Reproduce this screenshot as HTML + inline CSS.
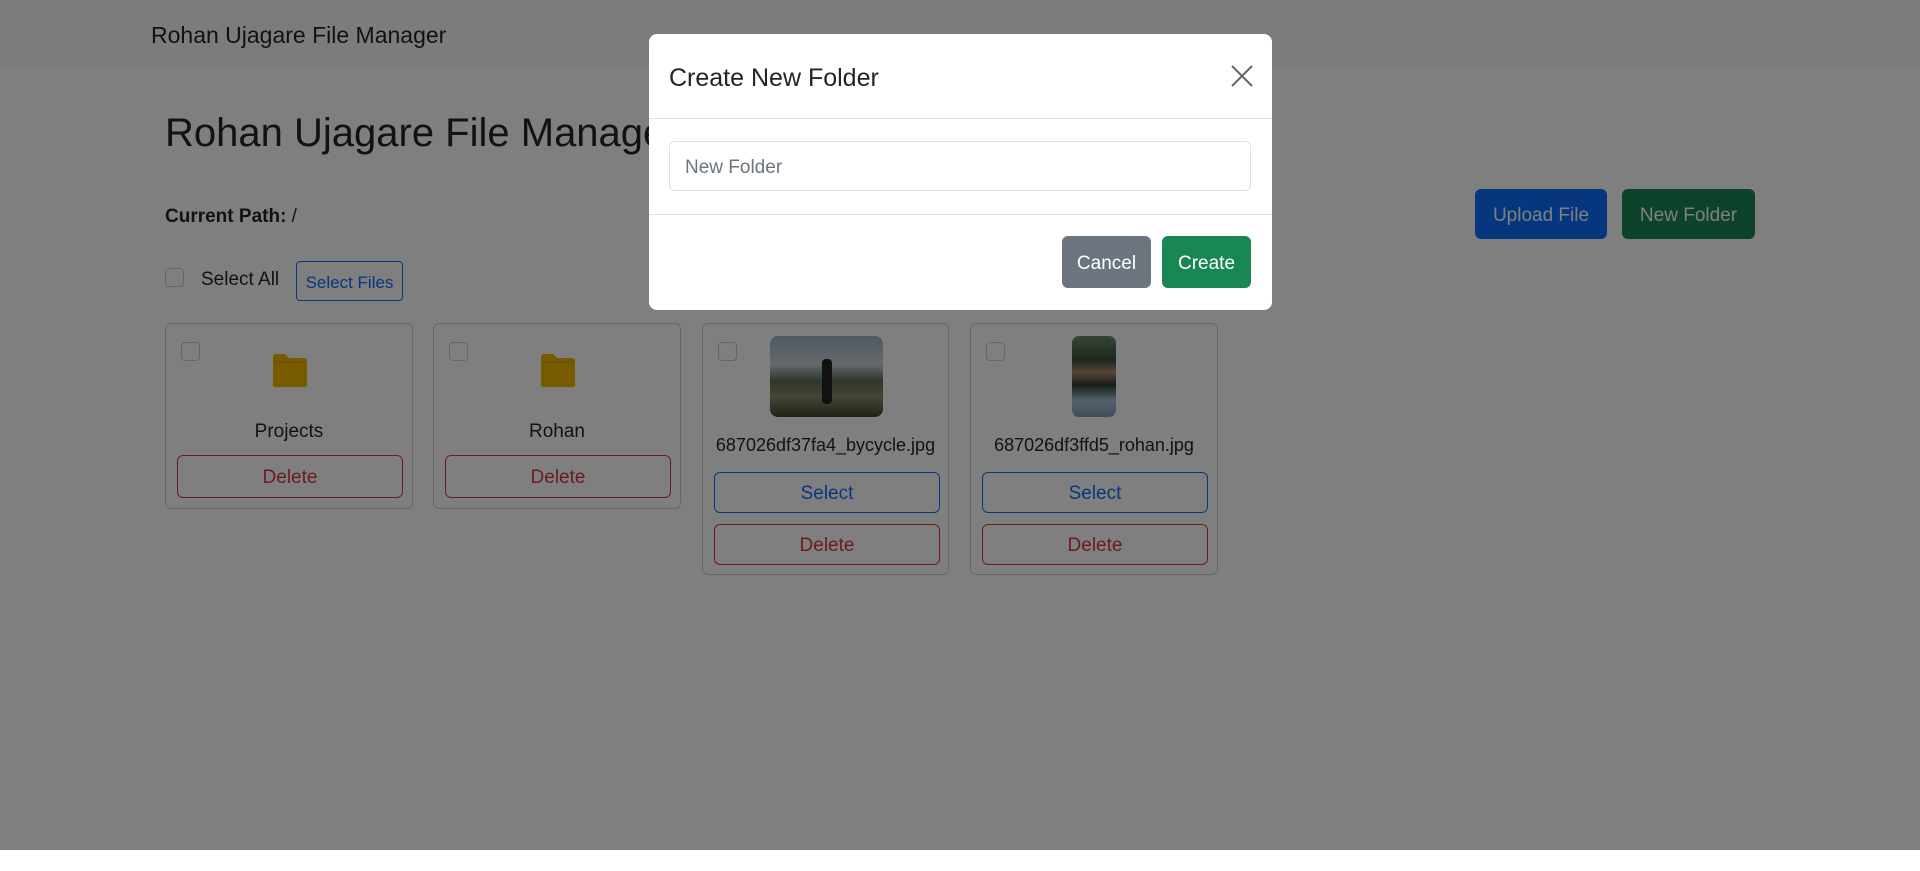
<!DOCTYPE html>
<html><head><meta charset="utf-8"><style>
*{box-sizing:border-box;margin:0;padding:0}
body{width:1920px;height:871px;background:#fff;font-family:"Liberation Sans",sans-serif;position:relative;overflow:hidden;color:#212529}
#page{position:absolute;left:0;top:0;width:1920px;height:850px;background:#fefefe}
.nav{position:absolute;left:0;top:0;width:1920px;height:69px;background:#f8f8f8}
.abs{position:absolute}
.brand{left:151px;top:22px;font-size:23px;color:#212529}
h1{position:absolute;left:165px;top:111px;font-size:40px;font-weight:500}
.btn{position:absolute;border-radius:6px;display:flex;align-items:center;justify-content:center;font-size:19px;padding-top:3px}
.cb{position:absolute;width:19px;height:19px;border:1px solid #ccc;border-radius:4px;background:#fff}
.card{position:absolute;border:1px solid #d0d0d0;border-radius:6px;background:#fff}
.od{border:1px solid #dc3545;color:#dc3545}
.ob{border:1px solid #0d6efd;color:#0d6efd}
.name{position:absolute;width:100%;text-align:center;font-size:19px}
#ov{position:absolute;left:0;top:0;width:1920px;height:850px;background:rgba(0,0,0,.5)}
.modal{position:absolute;left:649px;top:34px;width:623px;height:276px;background:#fff;border-radius:8px}
</style></head><body>
<div id="page">
<div class="nav"><div class="abs brand">Rohan Ujagare File Manager</div></div>
<h1>Rohan Ujagare File Manager</h1>
<div class="abs" style="left:165px;top:206px;font-size:19px"><b>Current Path:</b> /</div>
<div class="btn" style="left:1475px;top:189px;width:132px;height:50px;background:#0d6efd;color:#fff">Upload File</div>
<div class="btn" style="left:1622px;top:189px;width:133px;height:50px;background:#198754;color:#fff">New Folder</div>
<div class="cb" style="left:165px;top:268px"></div>
<div class="abs" style="left:201px;top:269px;font-size:19px">Select All</div>
<div class="btn ob" style="left:296px;top:261px;width:107px;height:40px;font-size:17px;border-radius:4px">Select Files</div>

<div class="card" style="left:165px;top:323px;width:248px;height:186px">
 <div class="cb" style="left:15px;top:18px"></div>
 <svg class="abs" style="left:104px;top:27px" width="40" height="38" viewBox="0 0 40 38"><path d="M3 6 Q3 3 6 3 H15 L19 7 H34 Q37 7 37 10 V34 Q37 36 34 36 H6 Q3 36 3 34Z" fill="#f0b400"/><path d="M3 11 H37" stroke="#d9a100" stroke-width="1"/></svg>
 <div class="name" style="top:97px">Projects</div>
 <div class="btn od" style="left:11px;top:131px;width:226px;height:43px">Delete</div>
</div>
<div class="card" style="left:433px;top:323px;width:248px;height:186px">
 <div class="cb" style="left:15px;top:18px"></div>
 <svg class="abs" style="left:104px;top:27px" width="40" height="38" viewBox="0 0 40 38"><path d="M3 6 Q3 3 6 3 H15 L19 7 H34 Q37 7 37 10 V34 Q37 36 34 36 H6 Q3 36 3 34Z" fill="#f0b400"/><path d="M3 11 H37" stroke="#d9a100" stroke-width="1"/></svg>
 <div class="name" style="top:97px">Rohan</div>
 <div class="btn od" style="left:11px;top:131px;width:226px;height:43px">Delete</div>
</div>
<div class="card" style="left:702px;top:323px;width:247px;height:252px">
 <div class="cb" style="left:15px;top:18px"></div>
 <div class="abs" style="left:67px;top:12px;width:113px;height:81px;border-radius:8px;background:linear-gradient(180deg,#9fb3c4 0%,#c9d3db 35%,#5d6f55 55%,#8a8a6a 75%,#3c4a32 100%)"></div>
 <div class="abs" style="left:119px;top:35px;width:10px;height:45px;background:#222;border-radius:4px"></div>
 <div class="name" style="top:111px;font-size:18px">687026df37fa4_bycycle.jpg</div>
 <div class="btn ob" style="left:11px;top:148px;width:226px;height:41px">Select</div>
 <div class="btn od" style="left:11px;top:200px;width:226px;height:41px">Delete</div>
</div>
<div class="card" style="left:970px;top:323px;width:248px;height:252px">
 <div class="cb" style="left:15px;top:18px"></div>
 <div class="abs" style="left:101px;top:12px;width:44px;height:81px;border-radius:7px;background:linear-gradient(180deg,#6d8a6a 0%,#3d4e3d 30%,#b08a70 45%,#2d3a2f 60%,#a9c3da 80%,#7f9bb5 100%)"></div>
 <div class="name" style="top:111px;font-size:18px">687026df3ffd5_rohan.jpg</div>
 <div class="btn ob" style="left:11px;top:148px;width:226px;height:41px">Select</div>
 <div class="btn od" style="left:11px;top:200px;width:226px;height:41px">Delete</div>
</div>
</div>
<div id="ov"></div>
<div class="modal">
 <div class="abs" style="left:20px;top:30px;font-size:25px;font-weight:500">Create New Folder</div>
 <svg class="abs" style="left:582px;top:31px" width="22" height="22" viewBox="0 0 22 22"><path d="M1 1L21 21M21 1L1 21" stroke="#666" stroke-width="2"/></svg>
 <div class="abs" style="left:0;top:84px;width:623px;height:1px;background:#dee2e6"></div>
 <div class="abs" style="left:20px;top:107px;width:582px;height:50px;border:1px solid #dee2e6;border-radius:6px;font-size:19px;color:#6c757d;padding:15px 15px 0">New Folder</div>
 <div class="abs" style="left:0;top:180px;width:623px;height:1px;background:#dee2e6"></div>
 <div class="btn" style="left:413px;top:202px;width:89px;height:52px;background:#6c757d;color:#fff">Cancel</div>
 <div class="btn" style="left:513px;top:202px;width:89px;height:52px;background:#198754;color:#fff">Create</div>
</div>
</body></html>
